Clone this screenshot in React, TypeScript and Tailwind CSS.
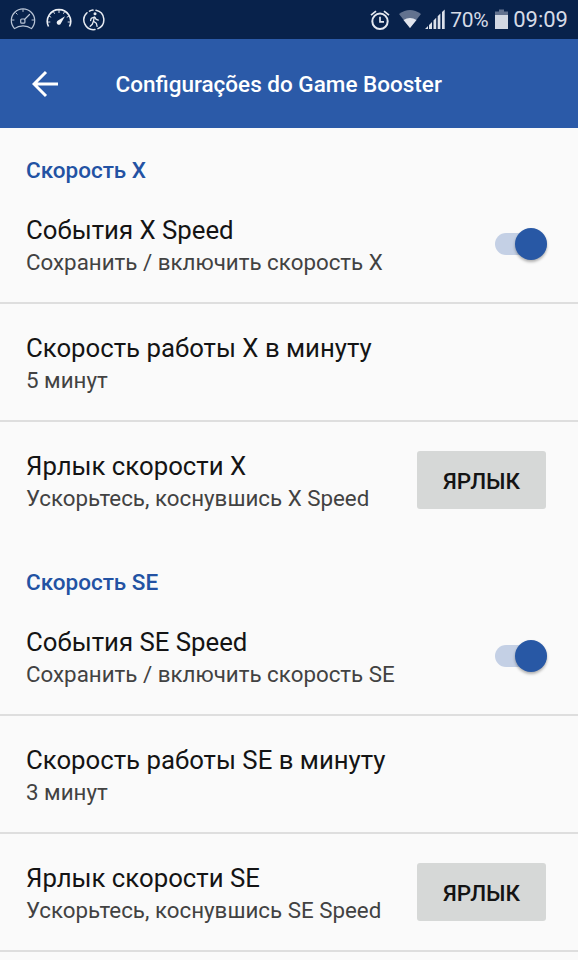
const EventGauge = () => (
  <svg className="h-6 w-[26px]" viewBox="0 0 26 24" fill="none" stroke="#b9c4d5" strokeWidth="1.2" strokeLinecap="round" strokeLinejoin="round">
    <path d="M4.500 20.600A11.700 11.700 0 1 1 21.500 20.600Q18 17.800 13 17.800T4.500 20.600z" />
    <path d="M14.500 11.500l5-5" />
    <rect x="10.700" y="11" width="4.200" height="4.200" rx="1" />
    <path d="M13 1.500v2M6 5l1.200 1.200M2 12h2M24 12h-2" strokeWidth="1" />
  </svg>
)

const SpeedGauge = () => (
  <svg className="h-6 w-[26px]" viewBox="0 0 26 24" fill="none" stroke="#eef1f6" strokeWidth="1.6">
    <path d="M2.500 18.500A11.700 11.700 0 1 1 23.500 18.500" />
    <path d="M13 2v3M7.300 3.500l1.300 2.300M3 8l2.200 1.300M2 14h2.300M18.700 3.500l-1.300 2.300M23 8l-2.200 1.300M24 14h-2.300" strokeWidth="0.9" />
    <path d="M19 8.200l-4 7a2.200 2.200 0 1 1-3-2.600z" fill="#eef1f6" stroke="none" />
  </svg>
)

const Walker = () => (
  <svg className="h-6 w-6" viewBox="0 0 24 24" fill="none" stroke="#e6eaf1" strokeWidth="1.5" strokeLinecap="round" strokeLinejoin="round">
    <path d="M14 2.200A9.700 9.700 0 0 1 16 20.600M13 21.500A9.700 9.700 0 0 1 5 4.800M7.500 3.200A9.700 9.700 0 0 1 11 2.100" />
    <circle cx="13" cy="5.800" r="1.500" fill="#e6eaf1" stroke="none" />
    <path d="M12.300 8.800l-.8 4.400 2.800 2 .8 3.200M11.300 13.500l-1 2.700-2.100 2M12.200 9l-3 1.300-.6 2.200M12.800 9.200l1.400 2.100 2.100.8" strokeWidth="1.3" />
  </svg>
)

const Alarm = () => (
  <svg className="h-6 w-[20px]" viewBox="0 0 20 24" fill="none" stroke="#e4e8f0" strokeWidth="2">
    <circle cx="10" cy="13.300" r="7.700" />
    <path d="M10 8.800v5h4M1 7.200l5-4.100M19 7.200l-5-4.100" strokeWidth="1.7" />
  </svg>
)

function StatusBar() {
  return (
    <div className="flex h-[39px] items-center bg-[#08224b] pl-2.5 pr-[10px] text-[22px] text-[#d6dbe6]">
      <div className="flex gap-2.5">
        <EventGauge />
        <SpeedGauge />
        <Walker />
      </div>
      <div className="ml-auto flex items-center">
        <Alarm />
        <svg className="ml-[9px] h-6 w-[22px]" viewBox="0 0 22 24">
          <path d="M0 6Q11-2 22 6L11 20z" fill="#62728f" />
          <path d="M4.500 12Q11 8 17.500 12L11 20z" fill="#e1e5ed" />
        </svg>
        <svg className="ml-1 h-6 w-5" viewBox="0 0 20 24" fill="#dce1ea">
          <path d="M0 21l3-3v3zM4 17l3-3v7H4zM8.500 12.500l2.700-2.700V21H8.500zM12.700 8.300l2.700-2.700V21h-2.700zM17 4l2.700-2.500V21H17z" />
        </svg>
        <span className="ml-[5px] inline-block w-[39px] whitespace-nowrap pt-px text-[21px] leading-6 tracking-[-0.3px]">70%</span>
        <svg className="ml-1.5 h-6 w-[13px]" viewBox="0 0 13 24">
          <path d="M4 1.500h5v2h4V8H0V3.500h4z" fill="#62728f" />
          <path d="M0 7h13v14H0z" fill="#d2d8e3" />
        </svg>
        <span className="ml-[5px] pt-px leading-6">09:09</span>
      </div>
    </div>
  )
}

function Toggle() {
  return (
    <div className="flex h-[22px] w-[52px] items-center justify-end rounded-full bg-[#c4d0e5]">
      <div className="size-8 shrink-0 rounded-full bg-[#2858a5] shadow-[0_2px_3px_rgba(0,0,0,0.3)]" />
    </div>
  )
}

function Label({ title, summary }: { title: string; summary: string }) {
  return (
    <div className="pt-[5px]">
      <div className="text-[25.75px] leading-8 text-[#141414]">{title}</div>
      <div className="text-[22.33px] leading-[33px] text-[#424242]">{summary}</div>
    </div>
  )
}

function Section({ name, minutes }: { name: string; minutes: string }) {
  return (
    <section className="group">
      <h2 className="flex h-[58px] items-end px-[26px] text-[22.5px] leading-8 font-medium text-[#2352a3]">Скорость {name}</h2>
      <div className="flex h-[118px] items-center justify-between border-b-2 border-[#dedede] pl-[26px] pr-[31px]">
        <Label title={`События ${name} Speed`} summary={`Сохранить / включить скорость ${name}`} />
        <Toggle />
      </div>
      <div className="flex h-[118px] items-center border-b-2 border-[#dedede] px-[26px]">
        <Label title={`Скорость работы ${name} в минуту`} summary={minutes} />
      </div>
      <div className="flex h-[118px] items-center justify-between border-b-2 border-transparent pl-[26px] pr-8 group-last:border-[#dedede]">
        <Label title={`Ярлык скорости ${name}`} summary={`Ускорьтесь, коснувшись ${name} Speed`} />
        <button className="h-[58px] w-[129px] rounded-[3px] bg-[#d6d8d7] pt-1 text-[22.5px] font-medium text-[#141414]">ЯРЛЫК</button>
      </div>
    </section>
  )
}

export default function App() {
  return (
    <div className="h-[960px] w-[578px] overflow-hidden bg-[#fafafa] font-['Roboto',sans-serif]">
      <StatusBar />
      <header className="flex h-[89px] items-center bg-[#2b5aa8] pl-8 text-white">
        <svg className="h-7 w-7" viewBox="0 0 28 28" fill="none" stroke="currentColor" strokeWidth="3">
          <path d="M26 14H3M14 2L2 14l12 12" />
        </svg>
        <h1 className="ml-[55.5px] pt-0.5 text-[22.5px] font-medium">Configurações do Game Booster</h1>
      </header>
      <Section name="X" minutes="5 минут" />
      <Section name="SE" minutes="3 минут" />
    </div>
  )
}
